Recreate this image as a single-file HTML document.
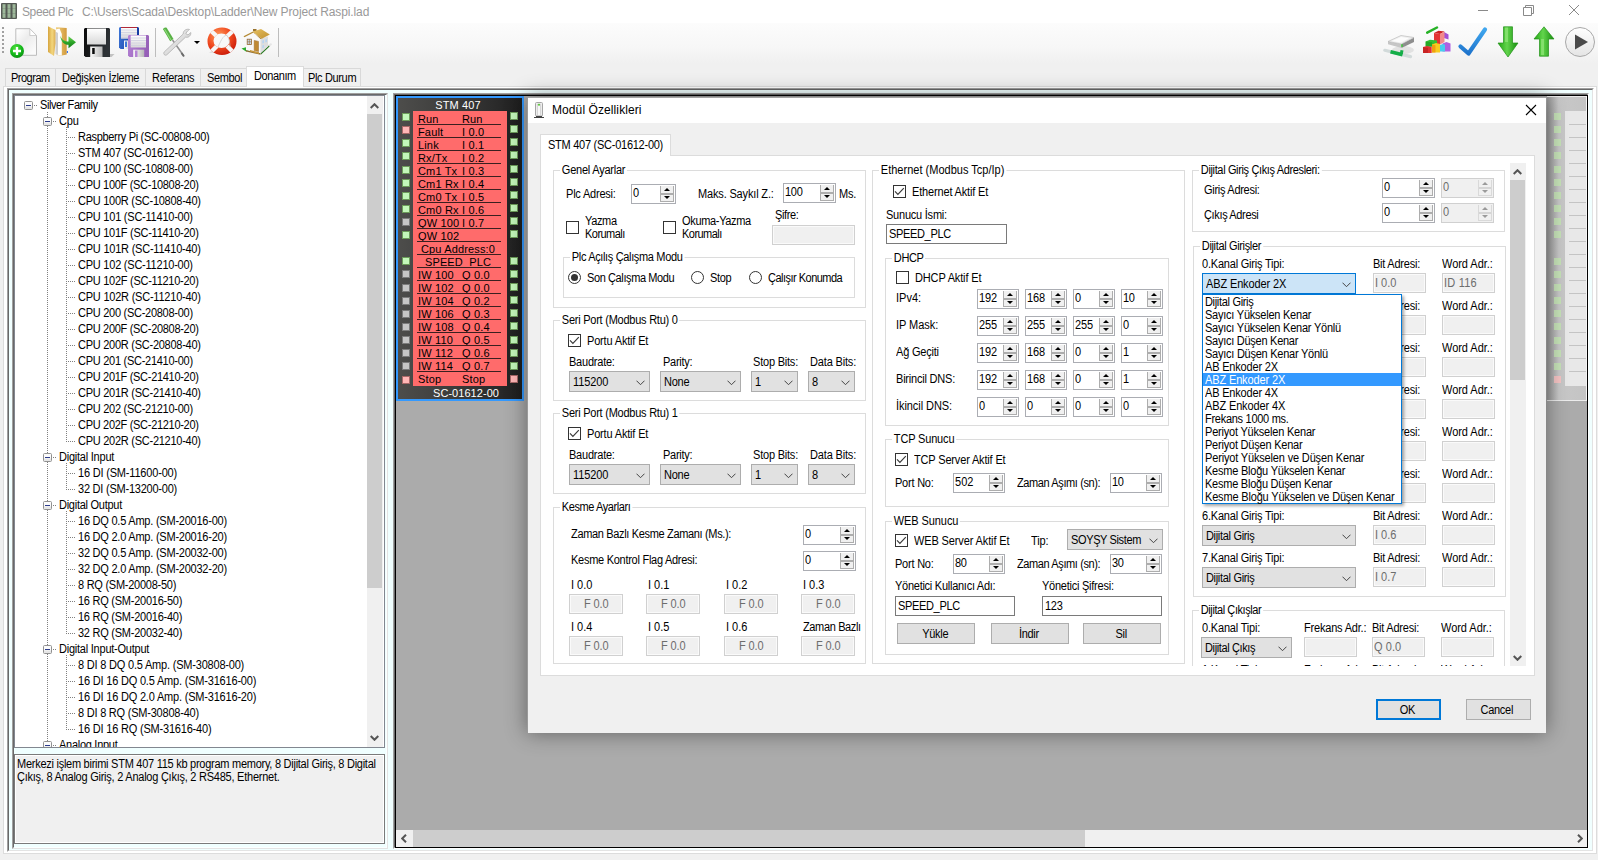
<!DOCTYPE html><html><head><meta charset="utf-8"><title>Speed Plc</title><style>
*{box-sizing:border-box}
html,body{margin:0;padding:0}
body{width:1598px;height:860px;overflow:hidden;background:#f0f0f0;position:relative;
 font-family:"Liberation Sans",sans-serif;font-size:11px;line-height:13px;letter-spacing:-0.28px;color:#000}
.a{position:absolute}
.x{font-size:12px;letter-spacing:-0.305px;transform:scaleX(0.9167);transform-origin:0 0;margin-left:-.5px}
.dtb.c .x,.btn .x{transform-origin:50% 0}
.t{position:absolute;white-space:pre;height:13px}
.g{position:absolute;border:1px solid #dcdcdc}
.gl{position:absolute;background:#fff;padding:0 2px;white-space:pre;height:13px}
.nud{position:absolute;border:1px solid #abadb3;background:#fff}
.nud .v{position:absolute;left:1px;top:2px;white-space:pre}
.nud .b{position:absolute;right:1px;top:1px;width:14px;height:16px;background:#f0f0f0;border-left:1px solid #adadad;border-right:1px solid #adadad;border-bottom:1px solid #adadad}
.nud .b:before{content:"";position:absolute;left:0;right:0;top:7px;height:2px;background:#adadad}
.nud .u,.nud .d{position:absolute;left:3px;width:0;height:0;border-left:3px solid transparent;border-right:3px solid transparent}
.nud .u{top:2px;border-bottom:3px solid #000}
.nud .d{top:10px;border-top:3px solid #000}
.nud.dis{background:#f0f0f0;border-color:#d0d0d0}
.nud.dis .v{color:#6d6d6d}
.nud.dis .b{border-color:#d9d9d9}
.nud.dis .b:before{background:#d5d5d5}
.nud.dis .u{border-bottom-color:#9a9a9a}
.nud.dis .d{border-top-color:#9a9a9a}
.cb{position:absolute;width:13px;height:13px;border:1px solid #333;background:#fff}
.cb svg{position:absolute;left:0;top:0}
.rb{position:absolute;width:13px;height:13px;border:1px solid #333;background:#fff;border-radius:50%}
.rb.on:after{content:"";position:absolute;left:2px;top:2px;width:7px;height:7px;border-radius:50%;background:#333}
.cmb{position:absolute;border:1px solid #adadad;background:#e1e1e1;height:21px}
.cmb .v{position:absolute;left:3px;top:4px;white-space:pre}
.cmb svg{position:absolute;right:4px;top:8px}
.tb{position:absolute;border:1px solid #7a7a7a;background:#fff;height:20px}
.tb .v{position:absolute;left:2px;top:3px;white-space:pre}
.dtb{position:absolute;border:1px solid #d0d0d0;background:#f0f0f0;height:20px;color:#6d6d6d;box-shadow:inset 0 0 0 1px #fafafa}
.dtb .v{position:absolute;left:1.5px;top:3px;white-space:pre}
.dtb.c .v{left:0;right:0;text-align:center}
.btn{position:absolute;border:1px solid #adadad;background:#e1e1e1;text-align:center;height:21px;line-height:21px;padding-right:2px}
.li{position:absolute;left:0;width:198px;height:13px;padding-left:2px;padding-top:1px;line-height:12px;white-space:pre}
</style></head><body>
<div class="a" style="left:0;top:0;width:1598px;height:23px;background:#fff"></div>
<svg class="a" style="left:1px;top:3px" width="16" height="16" viewBox="0 0 16 16"><rect x="0" y="0" width="16" height="16" rx="1" fill="#555a55"/><rect x="1.5" y="1.2" width="3" height="13.6" fill="#9db89a"/><rect x="6.5" y="1.2" width="3" height="13.6" fill="#9db89a"/><rect x="11.5" y="1.2" width="3" height="13.6" fill="#9db89a"/><rect x="0" y="5" width="16" height="1" fill="#555a55" opacity=".22"/><rect x="0" y="10" width="16" height="1" fill="#555a55" opacity=".22"/></svg>
<span class="t" style="left:22px;top:5px;font-size:12px;line-height:15px;height:15px;color:#999;letter-spacing:-0.389px">Speed Plc</span>
<span class="t" style="left:82px;top:5px;font-size:12px;line-height:15px;height:15px;color:#999;letter-spacing:-0.123px">C:\Users\Scada\Desktop\Ladder\New Project Raspi.lad</span>
<svg class="a" style="left:1470px;top:0" width="128" height="22" viewBox="0 0 128 22"><g fill="none" stroke="#8a8a8a" stroke-width="1"><path d="M8 10.5H18"/><path d="M53.5 7.5h8v8h-8z M55.5 7.5v-2h8v8h-2"/><path d="M99 5L109 15M109 5L99 15"/></g></svg>
<div class="a" style="left:0;top:23px;width:1598px;height:40px;background:linear-gradient(#fcfcfc,#f7f7f7 60%,#f0f0f0)"></div>
<div class="a" style="left:2px;top:27px;width:2px;height:27px;background:repeating-linear-gradient(#a0a0a0 0 2px,transparent 2px 4px)"></div>
<svg class="a" style="left:8px;top:26px" width="32" height="33" viewBox="0 0 32 33"><defs><linearGradient id="pg" x1=".2" y1="0" x2=".9" y2=".8"><stop offset="0" stop-color="#fdfdfd"/><stop offset=".45" stop-color="#ececec"/><stop offset="1" stop-color="#fafafa"/></linearGradient><radialGradient id="gc" cx=".4" cy=".3" r=".75"><stop offset="0" stop-color="#52e23e"/><stop offset=".6" stop-color="#14b81a"/><stop offset="1" stop-color="#0a8c10"/></radialGradient></defs><path d="M7.800 2.700H21.800L28.500 9.500V29.300H7.800Z" fill="url(#pg)" stroke="#bcbcbc" stroke-width="1"/><path d="M21.800 2.700V9.500H28.500Z" fill="#fff" stroke="#c4c4c4" stroke-width=".8"/><circle cx="9" cy="25" r="7" fill="url(#gc)"/><path d="M9 21V29M5 25H13" stroke="#fff" stroke-width="2.300"/></svg>
<svg class="a" style="left:46px;top:25px" width="32" height="33" viewBox="0 0 32 33"><defs><linearGradient id="fo" x1="0" y1="0" x2="1" y2="0"><stop offset="0" stop-color="#d6a43e"/><stop offset=".55" stop-color="#f3d77e"/><stop offset="1" stop-color="#dcae52"/></linearGradient><linearGradient id="fo2" x1="0" y1="0" x2="1" y2="0"><stop offset="0" stop-color="#f0d080"/><stop offset="1" stop-color="#d29a3c"/></linearGradient><linearGradient id="ga" x1="0" y1="0" x2="0" y2="1"><stop offset="0" stop-color="#7fdc62"/><stop offset=".5" stop-color="#2fa82a"/><stop offset="1" stop-color="#157a18"/></linearGradient></defs><path d="M10 2.300L20.700 3V29.500L16 30.500L10 30Z" fill="url(#fo2)"/><path d="M9.800 4.500L13.500 3.500L15.800 9V30.500L9.800 29.500Z" fill="#fdfdfd"/><path d="M9.500 6.500L12 8V30L9.500 29Z" fill="#cfcfcf"/><rect x="20.800" y="26" width="1.200" height="2" fill="#3a78f0"/><path d="M2 1.200L9.500 5V18.500L8 31L2 27Z" fill="url(#fo)"/><path d="M14 10.500C16 15 19 16.500 22.500 16.500V11.200L30 17.200L22.500 23.200V19.800C18 19.800 15 16.500 14 10.500Z" fill="url(#ga)"/></svg>
<div class="a" style="left:96px;top:54px;width:17px;height:3px;background:#888;opacity:.45;transform:skewX(-45deg)"></div>
<svg class="a" style="left:84px;top:28px" width="26" height="29" viewBox="0 0 26 29"><defs><linearGradient id="f1" x1="0" y1="0" x2="1" y2=".3"><stop offset="0" stop-color="#0a0a0a"/><stop offset="1" stop-color="#2e3236"/></linearGradient><linearGradient id="f1l" x1="0" y1="0" x2="0" y2="1"><stop offset="0" stop-color="#ffffff"/><stop offset="1" stop-color="#d8d8d8"/></linearGradient><linearGradient id="f1s" x1="0" y1="0" x2="1" y2="0"><stop offset="0" stop-color="#fafafa"/><stop offset="1" stop-color="#b8b8b8"/></linearGradient></defs><path d="M1 0H25L26 1V29H1.500L0 27.5V1Z" fill="url(#f1)"/><rect x="3.0" y="0.5" width="19.0" height="16.0" fill="url(#f1l)"/><rect x="6.2" y="18.5" width="12.3" height="10.5" fill="url(#f1s)"/><rect x="8.2" y="20.0" width="2.5" height="6.0" fill="#0a0a0a"/></svg>
<svg class="a" style="left:119px;top:27px" width="20" height="22" viewBox="0 0 20 22"><defs><linearGradient id="f2" x1="0" y1="0" x2="1" y2=".3"><stop offset="0" stop-color="#3f78d8"/><stop offset="1" stop-color="#1238a0"/></linearGradient><linearGradient id="f2l" x1="0" y1="0" x2="0" y2="1"><stop offset="0" stop-color="#ffffff"/><stop offset="1" stop-color="#d8d8d8"/></linearGradient><linearGradient id="f2s" x1="0" y1="0" x2="1" y2="0"><stop offset="0" stop-color="#fafafa"/><stop offset="1" stop-color="#b8b8b8"/></linearGradient></defs><path d="M1 0H19L20 1V22H1.500L0 20.5V1Z" fill="url(#f2)"/><rect x="2.0" y="0.5" width="16.0" height="11.2" fill="url(#f2l)"/><rect x="2.0" y="2.5" width="16.0" height="1" fill="#cfcfe0" opacity=".8"/><rect x="2.0" y="5.0" width="16.0" height="1" fill="#cfcfe0" opacity=".8"/><rect x="2.0" y="7.5" width="16.0" height="1" fill="#cfcfe0" opacity=".8"/><rect x="2.0" y="10.0" width="16.0" height="1" fill="#cfcfe0" opacity=".8"/><rect x="2.0" y="0" width="16.0" height="1" fill="#b02838"/><rect x="5.0" y="13.5" width="10.0" height="8.5" fill="url(#f2s)"/><rect x="6.0" y="14.5" width="2.0" height="5.5" fill="#3f78d8"/></svg>
<svg class="a" style="left:128px;top:35px" width="21" height="22" viewBox="0 0 21 22"><defs><linearGradient id="f3" x1="0" y1="0" x2="1" y2=".3"><stop offset="0" stop-color="#b684d6"/><stop offset="1" stop-color="#9660b8"/></linearGradient><linearGradient id="f3l" x1="0" y1="0" x2="0" y2="1"><stop offset="0" stop-color="#ffffff"/><stop offset="1" stop-color="#d8d8d8"/></linearGradient><linearGradient id="f3s" x1="0" y1="0" x2="1" y2="0"><stop offset="0" stop-color="#fafafa"/><stop offset="1" stop-color="#b8b8b8"/></linearGradient></defs><path d="M1 0H20L21 1V22H1.500L0 20.5V1Z" fill="url(#f3)"/><rect x="2.7" y="0.5" width="15.3" height="12.0" fill="url(#f3l)"/><rect x="2.7" y="2.5" width="15.3" height="1" fill="#cfcfe0" opacity=".8"/><rect x="2.7" y="5.0" width="15.3" height="1" fill="#cfcfe0" opacity=".8"/><rect x="2.7" y="7.5" width="15.3" height="1" fill="#cfcfe0" opacity=".8"/><rect x="2.7" y="10.0" width="15.3" height="1" fill="#cfcfe0" opacity=".8"/><rect x="5.2" y="14.7" width="11.0" height="7.3" fill="url(#f3s)"/><rect x="7.0" y="15.5" width="2.5" height="6.5" fill="#b684d6"/></svg>
<svg class="a" style="left:160px;top:26px" width="34" height="32" viewBox="0 0 34 32"><defs><linearGradient id="wr" x1="0" y1="0" x2="1" y2="1"><stop offset="0" stop-color="#fafafa"/><stop offset="1" stop-color="#c2c2c2"/></linearGradient></defs><path d="M12.500 14L23.500 29.500" stroke="#8e8e8e" stroke-width="1.500"/><path d="M21.500 27L24 30.500" stroke="#6a6a6a" stroke-width="2"/><path d="M3.200 3.500C3 2 5.500 0.800 6.800 2L13.500 13L10.200 15.200Z" fill="#58b044"/><path d="M4.500 3L11 14" stroke="#8ad878" stroke-width="1.200"/><path d="M29.500 3.500C26.500 2.500 23 4.500 23.200 8L4.200 26C2.800 27.800 5 30.200 6.800 28.800L25.500 11.200C28.500 12 31.200 9.500 30.800 6.500L28 9L25.800 7.500L27.500 5Z" fill="url(#wr)" stroke="#a8a8a8" stroke-width=".7"/></svg>
<svg class="a" style="left:206px;top:26px" width="32" height="31" viewBox="0 0 32 31"><defs><radialGradient id="lb" cx=".38" cy=".3" r=".75"><stop offset="0" stop-color="#ff9a5a"/><stop offset=".55" stop-color="#f04a20"/><stop offset="1" stop-color="#c81808"/></radialGradient><clipPath id="lbc"><path d="M16 1.5A14.5 13.8 0 1 0 16 29.1A14.5 13.8 0 1 0 16 1.500ZM15.500 7.500A8 7.300 0 1 1 15.500 22.100A8 7.300 0 1 1 15.500 7.500Z" clip-rule="evenodd"/></clipPath></defs><path d="M3 27L10 21L22 27Z" fill="#d8d8d8" opacity=".7"/><path d="M16 1.5A14.5 13.8 0 1 0 16 29.1A14.5 13.8 0 1 0 16 1.500ZM15.500 7.500A8 7.300 0 1 1 15.500 22.100A8 7.300 0 1 1 15.500 7.500Z" fill="url(#lb)" fill-rule="evenodd"/><g clip-path="url(#lbc)" stroke="#f6f6f6" stroke-width="4.400"><path d="M3 3L11 10.500"/><path d="M29 3L21 10.500"/><path d="M3 28L11 20"/><path d="M29 28L21 20"/></g><path d="M12 21C16 12 18 9 21 9.500C23 12 24 17 24 21" fill="none" stroke="#c8c8c8" stroke-width=".7"/></svg>
<svg class="a" style="left:240px;top:27px" width="32" height="30" viewBox="0 0 32 30"><defs><linearGradient id="rf" x1="0" y1="0" x2="1" y2="1"><stop offset="0" stop-color="#e6c060"/><stop offset="1" stop-color="#c09030"/></linearGradient></defs><path d="M20 24L31 16L32 17.500L21 27Z" fill="#d8d8d8" opacity=".6"/><path d="M1.500 21.500L6 20.300L10.500 23L6 24.600Z" fill="#2cac2c"/><path d="M20.500 26.300L29 18.500L29.500 19.500L21 27.500Z" fill="#2a7a22"/><path d="M6 24.500L20.500 27.800V26.300L6 23Z" fill="#8a6a30"/><path d="M6 9.500L12.500 5.500L20.500 11.500V26.300L6 23Z" fill="#f9f9f9"/><path d="M20.500 11.500L28 9.500V19.300L20.500 26.300Z" fill="#dedede"/><path d="M10 23L19 25.300V27L10 24.600Z" fill="#c8983c"/><rect x="7.200" y="12.200" width="4.300" height="5.300" fill="#c4dcf2" stroke="#9a6a30" stroke-width=".8"/><path d="M9.350 12.200V17.500M7.200 14.800H11.500" stroke="#9a6a30" stroke-width=".6"/><path d="M14.200 13.400L18.500 14.400V24.600L14.200 23.600Z" fill="#c08a34" stroke="#9a6a28" stroke-width=".5"/><path d="M22.300 13.500L24 13V16L22.300 16.600ZM25.300 12.500L27 12V15L25.300 15.600ZM22.300 18.500L24 17.800V20.500L22.300 21.500Z" fill="#b8d4f0"/><rect x="13" y="2" width="3.500" height="2.500" fill="#9a7430"/><path d="M12.500 4.700L21 2L29.800 7.500L21.800 11.800Z" fill="url(#rf)"/><path d="M3.500 9.300L12.500 4.700L13.600 5.600L4.500 10.300Z" fill="#b48a34"/><path d="M12.500 4.700L13.600 5.600L21.800 11.800L20.500 12Z" fill="#a87c2c"/></svg>
<svg class="a" style="left:1383px;top:33px" width="32" height="26" viewBox="0 0 32 26"><ellipse cx="20" cy="17" rx="11" ry="4" fill="#000" opacity=".08"/><path d="M5 8.500L18.500 11V15L5 11.200Z" fill="#c6c6c6"/><path d="M18.500 11L31 4.500V9L18.500 15Z" fill="#8e8e8e"/><path d="M5 8.500L18 2.500L31 4.500L18.500 11Z" fill="#efefef" stroke="#b4b4b4" stroke-width=".6"/><path d="M9 8L18 4L26 5.200L18 9.500Z" fill="#fff" opacity=".8"/><rect x="18.300" y="11.300" width="1.300" height="2.600" fill="#28d028"/><path d="M1.800 17.300L27.500 23.600" stroke="#d2dada" stroke-width="3.200" stroke-linecap="round"/><path d="M7.500 18.800L19.500 21.800" stroke="#14ae48" stroke-width="3.600"/><path d="M18.300 21L19 17.200" stroke="#14ae48" stroke-width="3"/></svg>
<svg class="a" style="left:1421px;top:25px" width="32" height="30" viewBox="0 0 32 30"><path d="M6.200 7.700L16 2.500" stroke="#26b226" stroke-width="2.500" stroke-linecap="round"/><path d="M23 7L27.500 9.500V14.500L23 13Z" fill="#a452d4"/><path d="M13 8L17.500 5.700L23.500 6.500L19 9Z" fill="#cc2020"/><path d="M13 8L19 9V19.500L13 18.500Z" fill="#e43434"/><path d="M19 9L23.500 6.500V17L19 19.500Z" fill="#f28a8a"/><path d="M21.500 18.500L25.500 17L29.500 18.500V26.500L21.500 26.500Z" fill="#b060e0"/><path d="M4.700 16.500L9 14.700L16 15.500V21.500L4.700 21.500Z" fill="#34c034"/><path d="M4.700 16.500L11 17.300V21.500H4.700Z" fill="#26a826"/><path d="M2 22L6 21L10.700 22V28L2 28Z" fill="#e03030"/><path d="M2 22L7 23V28H2Z" fill="#c82424"/><path d="M11 19.500L15 18L19 19V27.500L11 27.500Z" fill="#f8cc20"/><path d="M11 19.500L14.500 20.300V27.500H11Z" fill="#f0a010"/><path d="M19 20L22 19L24 19.800V26.500H19Z" fill="#48ccee"/></svg>
<svg class="a" style="left:1457px;top:26px" width="32" height="32" viewBox="0 0 32 32"><defs><linearGradient id="ck" x1="0" y1="0" x2="0" y2="1"><stop offset="0" stop-color="#3fa6ee"/><stop offset="1" stop-color="#1e74cc"/></linearGradient></defs><path d="M3.500 20.500L11.500 27.500L28 3.500" fill="none" stroke="url(#ck)" stroke-width="4.200" stroke-linecap="round" stroke-linejoin="round"/></svg>
<svg class="a" style="left:1497px;top:26px" width="22" height="32" viewBox="0 0 22 32"><defs><linearGradient id="gd" x1="0" y1="0" x2="1" y2="0"><stop offset="0" stop-color="#23a614"/><stop offset=".45" stop-color="#62d44c"/><stop offset="1" stop-color="#168e0c"/></linearGradient></defs><path d="M6.500 0.800H15.500V17H21L11 31L1 17H6.500Z" fill="url(#gd)" stroke="#23901a" stroke-width=".7"/><path d="M8 1.500H11V16H8Z" fill="#a8f090" opacity=".5"/></svg>
<svg class="a" style="left:1533px;top:26px" width="22" height="31" viewBox="0 0 22 31"><path d="M6.500 30.200H15.500V13H21L11 0.800L1 13H6.500Z" fill="url(#gd)" stroke="#23901a" stroke-width=".7"/><path d="M8 29H11V13H8Z" fill="#a8f090" opacity=".5"/></svg>
<svg class="a" style="left:1564px;top:26px" width="32" height="32" viewBox="0 0 32 32"><defs><linearGradient id="pl" x1="0" y1="0" x2="0" y2="1"><stop offset="0" stop-color="#fff"/><stop offset="1" stop-color="#e4e4e4"/></linearGradient></defs><circle cx="16" cy="16" r="14.5" fill="url(#pl)" stroke="#a8a8a8" stroke-width="1"/><path d="M11 8.5L24 16L11 23.5Z" fill="#4a4a4a"/></svg>
<div class="a" style="left:155px;top:28px;width:1px;height:29px;background:#bdbdbd"></div>
<div class="a" style="left:278px;top:28px;width:1px;height:29px;background:#bdbdbd"></div>
<div class="a" style="left:194px;top:41px;width:0;height:0;border-left:3px solid transparent;border-right:3px solid transparent;border-top:3px solid #000"></div>
<div class="a" style="left:3px;top:86px;width:1594px;height:768px;border:1px solid #dcdcdc;background:#fff"></div>
<div class="a" style="left:5px;top:68px;width:51px;height:18px;background:#f0f0f0;border:1px solid #d9d9d9;border-bottom:none"></div>
<span class="t x" style="left:11px;top:72px;letter-spacing:-0.544px;">Program</span>
<div class="a" style="left:55px;top:68px;width:91px;height:18px;background:#f0f0f0;border:1px solid #d9d9d9;border-bottom:none"></div>
<span class="t x" style="left:62px;top:72px;letter-spacing:-0.300px;">Değişken İzleme</span>
<div class="a" style="left:145px;top:68px;width:56px;height:18px;background:#f0f0f0;border:1px solid #d9d9d9;border-bottom:none"></div>
<span class="t x" style="left:152px;top:72px;letter-spacing:-0.333px;">Referans</span>
<div class="a" style="left:200px;top:68px;width:47px;height:18px;background:#f0f0f0;border:1px solid #d9d9d9;border-bottom:none"></div>
<span class="t x" style="left:207px;top:72px;letter-spacing:-0.418px;">Sembol</span>
<div class="a" style="left:246px;top:66px;width:58px;height:21px;background:#fff;border:1px solid #dcdcdc;border-bottom:none"></div>
<span class="t x" style="left:254px;top:70px;letter-spacing:-0.443px;">Donanım</span>
<div class="a" style="left:303px;top:68px;width:58px;height:18px;background:#f0f0f0;border:1px solid #d9d9d9;border-bottom:none"></div>
<span class="t x" style="left:308px;top:72px;letter-spacing:-0.381px;">Plc Durum</span>
<div class="a" style="left:7px;top:88px;width:1587px;height:764px;background:#f0ffff;border-top:1px solid #a0a0a0;border-left:1px solid #a0a0a0;border-right:1px solid #fff;border-bottom:1px solid #fff"></div>
<div class="a" style="left:8px;top:89px;width:1585px;height:762px;border-top:1px solid #696969;border-left:1px solid #696969;border-right:1px solid #e3e3e3;border-bottom:1px solid #e3e3e3"></div>
<div class="a" style="left:12px;top:93px;width:376px;height:756px;border-top:1px solid #a0a0a0;border-left:1px solid #a0a0a0;border-right:1px solid #e3e3e3;border-bottom:1px solid #e3e3e3"></div>
<div class="a" style="left:13px;top:94px;width:374px;height:754px;border-top:1px solid #696969;border-left:1px solid #696969;border-right:1px solid #fbffff;border-bottom:1px solid #fbffff"></div>
<div class="a" style="left:14px;top:95px;width:371px;height:653px;background:#fff;border:1px solid #828790"></div>
<div class="a" id="tree" style="left:15px;top:96px;width:352px;height:651px;overflow:hidden;background:#fff">
<div class="a" style="left:32px;top:16px;width:1px;height:640px;background:repeating-linear-gradient(#808080 0 1px,transparent 1px 2px)"></div>
<div class="a" style="left:51px;top:31px;width:1px;height:315px;background:repeating-linear-gradient(#808080 0 1px,transparent 1px 2px)"></div>
<div class="a" style="left:51px;top:367px;width:1px;height:27px;background:repeating-linear-gradient(#808080 0 1px,transparent 1px 2px)"></div>
<div class="a" style="left:51px;top:415px;width:1px;height:123px;background:repeating-linear-gradient(#808080 0 1px,transparent 1px 2px)"></div>
<div class="a" style="left:51px;top:559px;width:1px;height:75px;background:repeating-linear-gradient(#808080 0 1px,transparent 1px 2px)"></div>
<svg class="a" style="left:9px;top:5px" width="9" height="9" viewBox="0 0 9 9"><rect x=".5" y=".5" width="8" height="8" rx="1" fill="#fbfbfb" stroke="#919191"/><rect x="1" y="5.500" width="7" height="2.500" fill="#e6e6e6"/><path d="M2 4.5H7" stroke="#2c3c8c" stroke-width="1"/></svg>
<div class="a" style="left:19px;top:9px;width:4px;height:1px;background:repeating-linear-gradient(90deg,#808080 0 1px,transparent 1px 2px)"></div>
<span class="t x" style="left:25px;top:3px;letter-spacing:-0.458px;">Silver Family</span>
<svg class="a" style="left:28px;top:21px" width="9" height="9" viewBox="0 0 9 9"><rect x=".5" y=".5" width="8" height="8" rx="1" fill="#fbfbfb" stroke="#919191"/><rect x="1" y="5.500" width="7" height="2.500" fill="#e6e6e6"/><path d="M2 4.5H7" stroke="#2c3c8c" stroke-width="1"/></svg>
<div class="a" style="left:38px;top:25px;width:4px;height:1px;background:repeating-linear-gradient(90deg,#808080 0 1px,transparent 1px 2px)"></div>
<span class="t x" style="left:44px;top:19px;letter-spacing:-0.177px;">Cpu</span>
<div class="a" style="left:53px;top:41px;width:7px;height:1px;background:repeating-linear-gradient(90deg,#808080 0 1px,transparent 1px 2px)"></div>
<span class="t x" style="left:63px;top:35px;letter-spacing:-0.339px;">Raspberry Pi (SC-00808-00)</span>
<div class="a" style="left:53px;top:57px;width:7px;height:1px;background:repeating-linear-gradient(90deg,#808080 0 1px,transparent 1px 2px)"></div>
<span class="t x" style="left:63px;top:51px;letter-spacing:-0.283px;">STM 407 (SC-01612-00)</span>
<div class="a" style="left:53px;top:73px;width:7px;height:1px;background:repeating-linear-gradient(90deg,#808080 0 1px,transparent 1px 2px)"></div>
<span class="t x" style="left:63px;top:67px;letter-spacing:-0.294px;">CPU 100 (SC-10808-00)</span>
<div class="a" style="left:53px;top:89px;width:7px;height:1px;background:repeating-linear-gradient(90deg,#808080 0 1px,transparent 1px 2px)"></div>
<span class="t x" style="left:63px;top:83px;letter-spacing:-0.326px;">CPU 100F (SC-10808-20)</span>
<div class="a" style="left:53px;top:105px;width:7px;height:1px;background:repeating-linear-gradient(90deg,#808080 0 1px,transparent 1px 2px)"></div>
<span class="t x" style="left:63px;top:99px;letter-spacing:-0.282px;">CPU 100R (SC-10808-40)</span>
<div class="a" style="left:53px;top:121px;width:7px;height:1px;background:repeating-linear-gradient(90deg,#808080 0 1px,transparent 1px 2px)"></div>
<span class="t x" style="left:63px;top:115px;letter-spacing:-0.251px;">CPU 101 (SC-11410-00)</span>
<div class="a" style="left:53px;top:137px;width:7px;height:1px;background:repeating-linear-gradient(90deg,#808080 0 1px,transparent 1px 2px)"></div>
<span class="t x" style="left:63px;top:131px;letter-spacing:-0.286px;">CPU 101F (SC-11410-20)</span>
<div class="a" style="left:53px;top:153px;width:7px;height:1px;background:repeating-linear-gradient(90deg,#808080 0 1px,transparent 1px 2px)"></div>
<span class="t x" style="left:63px;top:147px;letter-spacing:-0.242px;">CPU 101R (SC-11410-40)</span>
<div class="a" style="left:53px;top:169px;width:7px;height:1px;background:repeating-linear-gradient(90deg,#808080 0 1px,transparent 1px 2px)"></div>
<span class="t x" style="left:63px;top:163px;letter-spacing:-0.251px;">CPU 102 (SC-11210-00)</span>
<div class="a" style="left:53px;top:185px;width:7px;height:1px;background:repeating-linear-gradient(90deg,#808080 0 1px,transparent 1px 2px)"></div>
<span class="t x" style="left:63px;top:179px;letter-spacing:-0.286px;">CPU 102F (SC-11210-20)</span>
<div class="a" style="left:53px;top:201px;width:7px;height:1px;background:repeating-linear-gradient(90deg,#808080 0 1px,transparent 1px 2px)"></div>
<span class="t x" style="left:63px;top:195px;letter-spacing:-0.242px;">CPU 102R (SC-11210-40)</span>
<div class="a" style="left:53px;top:217px;width:7px;height:1px;background:repeating-linear-gradient(90deg,#808080 0 1px,transparent 1px 2px)"></div>
<span class="t x" style="left:63px;top:211px;letter-spacing:-0.294px;">CPU 200 (SC-20808-00)</span>
<div class="a" style="left:53px;top:233px;width:7px;height:1px;background:repeating-linear-gradient(90deg,#808080 0 1px,transparent 1px 2px)"></div>
<span class="t x" style="left:63px;top:227px;letter-spacing:-0.326px;">CPU 200F (SC-20808-20)</span>
<div class="a" style="left:53px;top:249px;width:7px;height:1px;background:repeating-linear-gradient(90deg,#808080 0 1px,transparent 1px 2px)"></div>
<span class="t x" style="left:63px;top:243px;letter-spacing:-0.282px;">CPU 200R (SC-20808-40)</span>
<div class="a" style="left:53px;top:265px;width:7px;height:1px;background:repeating-linear-gradient(90deg,#808080 0 1px,transparent 1px 2px)"></div>
<span class="t x" style="left:63px;top:259px;letter-spacing:-0.294px;">CPU 201 (SC-21410-00)</span>
<div class="a" style="left:53px;top:281px;width:7px;height:1px;background:repeating-linear-gradient(90deg,#808080 0 1px,transparent 1px 2px)"></div>
<span class="t x" style="left:63px;top:275px;letter-spacing:-0.326px;">CPU 201F (SC-21410-20)</span>
<div class="a" style="left:53px;top:297px;width:7px;height:1px;background:repeating-linear-gradient(90deg,#808080 0 1px,transparent 1px 2px)"></div>
<span class="t x" style="left:63px;top:291px;letter-spacing:-0.282px;">CPU 201R (SC-21410-40)</span>
<div class="a" style="left:53px;top:313px;width:7px;height:1px;background:repeating-linear-gradient(90deg,#808080 0 1px,transparent 1px 2px)"></div>
<span class="t x" style="left:63px;top:307px;letter-spacing:-0.294px;">CPU 202 (SC-21210-00)</span>
<div class="a" style="left:53px;top:329px;width:7px;height:1px;background:repeating-linear-gradient(90deg,#808080 0 1px,transparent 1px 2px)"></div>
<span class="t x" style="left:63px;top:323px;letter-spacing:-0.326px;">CPU 202F (SC-21210-20)</span>
<div class="a" style="left:53px;top:345px;width:7px;height:1px;background:repeating-linear-gradient(90deg,#808080 0 1px,transparent 1px 2px)"></div>
<span class="t x" style="left:63px;top:339px;letter-spacing:-0.282px;">CPU 202R (SC-21210-40)</span>
<svg class="a" style="left:28px;top:357px" width="9" height="9" viewBox="0 0 9 9"><rect x=".5" y=".5" width="8" height="8" rx="1" fill="#fbfbfb" stroke="#919191"/><rect x="1" y="5.500" width="7" height="2.500" fill="#e6e6e6"/><path d="M2 4.5H7" stroke="#2c3c8c" stroke-width="1"/></svg>
<div class="a" style="left:38px;top:361px;width:4px;height:1px;background:repeating-linear-gradient(90deg,#808080 0 1px,transparent 1px 2px)"></div>
<span class="t x" style="left:44px;top:355px;letter-spacing:-0.251px;">Digital Input</span>
<div class="a" style="left:53px;top:377px;width:7px;height:1px;background:repeating-linear-gradient(90deg,#808080 0 1px,transparent 1px 2px)"></div>
<span class="t x" style="left:63px;top:371px;letter-spacing:-0.202px;">16 DI (SM-11600-00)</span>
<div class="a" style="left:53px;top:393px;width:7px;height:1px;background:repeating-linear-gradient(90deg,#808080 0 1px,transparent 1px 2px)"></div>
<span class="t x" style="left:63px;top:387px;letter-spacing:-0.249px;">32 DI (SM-13200-00)</span>
<svg class="a" style="left:28px;top:405px" width="9" height="9" viewBox="0 0 9 9"><rect x=".5" y=".5" width="8" height="8" rx="1" fill="#fbfbfb" stroke="#919191"/><rect x="1" y="5.500" width="7" height="2.500" fill="#e6e6e6"/><path d="M2 4.5H7" stroke="#2c3c8c" stroke-width="1"/></svg>
<div class="a" style="left:38px;top:409px;width:4px;height:1px;background:repeating-linear-gradient(90deg,#808080 0 1px,transparent 1px 2px)"></div>
<span class="t x" style="left:44px;top:403px;letter-spacing:-0.285px;">Digital Output</span>
<div class="a" style="left:53px;top:425px;width:7px;height:1px;background:repeating-linear-gradient(90deg,#808080 0 1px,transparent 1px 2px)"></div>
<span class="t x" style="left:63px;top:419px;letter-spacing:-0.249px;">16 DQ 0.5 Amp. (SM-20016-00)</span>
<div class="a" style="left:53px;top:441px;width:7px;height:1px;background:repeating-linear-gradient(90deg,#808080 0 1px,transparent 1px 2px)"></div>
<span class="t x" style="left:63px;top:435px;letter-spacing:-0.249px;">16 DQ 2.0 Amp. (SM-20016-20)</span>
<div class="a" style="left:53px;top:457px;width:7px;height:1px;background:repeating-linear-gradient(90deg,#808080 0 1px,transparent 1px 2px)"></div>
<span class="t x" style="left:63px;top:451px;letter-spacing:-0.249px;">32 DQ 0.5 Amp. (SM-20032-00)</span>
<div class="a" style="left:53px;top:473px;width:7px;height:1px;background:repeating-linear-gradient(90deg,#808080 0 1px,transparent 1px 2px)"></div>
<span class="t x" style="left:63px;top:467px;letter-spacing:-0.249px;">32 DQ 2.0 Amp. (SM-20032-20)</span>
<div class="a" style="left:53px;top:489px;width:7px;height:1px;background:repeating-linear-gradient(90deg,#808080 0 1px,transparent 1px 2px)"></div>
<span class="t x" style="left:63px;top:483px;letter-spacing:-0.280px;">8 RQ (SM-20008-50)</span>
<div class="a" style="left:53px;top:505px;width:7px;height:1px;background:repeating-linear-gradient(90deg,#808080 0 1px,transparent 1px 2px)"></div>
<span class="t x" style="left:63px;top:499px;letter-spacing:-0.271px;">16 RQ (SM-20016-50)</span>
<div class="a" style="left:53px;top:521px;width:7px;height:1px;background:repeating-linear-gradient(90deg,#808080 0 1px,transparent 1px 2px)"></div>
<span class="t x" style="left:63px;top:515px;letter-spacing:-0.271px;">16 RQ (SM-20016-40)</span>
<div class="a" style="left:53px;top:537px;width:7px;height:1px;background:repeating-linear-gradient(90deg,#808080 0 1px,transparent 1px 2px)"></div>
<span class="t x" style="left:63px;top:531px;letter-spacing:-0.271px;">32 RQ (SM-20032-40)</span>
<svg class="a" style="left:28px;top:549px" width="9" height="9" viewBox="0 0 9 9"><rect x=".5" y=".5" width="8" height="8" rx="1" fill="#fbfbfb" stroke="#919191"/><rect x="1" y="5.500" width="7" height="2.500" fill="#e6e6e6"/><path d="M2 4.5H7" stroke="#2c3c8c" stroke-width="1"/></svg>
<div class="a" style="left:38px;top:553px;width:4px;height:1px;background:repeating-linear-gradient(90deg,#808080 0 1px,transparent 1px 2px)"></div>
<span class="t x" style="left:44px;top:547px;letter-spacing:-0.250px;">Digital Input-Output</span>
<div class="a" style="left:53px;top:569px;width:7px;height:1px;background:repeating-linear-gradient(90deg,#808080 0 1px,transparent 1px 2px)"></div>
<span class="t x" style="left:63px;top:563px;letter-spacing:-0.216px;">8 DI 8 DQ 0.5 Amp. (SM-30808-00)</span>
<div class="a" style="left:53px;top:585px;width:7px;height:1px;background:repeating-linear-gradient(90deg,#808080 0 1px,transparent 1px 2px)"></div>
<span class="t x" style="left:63px;top:579px;letter-spacing:-0.207px;">16 DI 16 DQ 0.5 Amp. (SM-31616-00)</span>
<div class="a" style="left:53px;top:601px;width:7px;height:1px;background:repeating-linear-gradient(90deg,#808080 0 1px,transparent 1px 2px)"></div>
<span class="t x" style="left:63px;top:595px;letter-spacing:-0.207px;">16 DI 16 DQ 2.0 Amp. (SM-31616-20)</span>
<div class="a" style="left:53px;top:617px;width:7px;height:1px;background:repeating-linear-gradient(90deg,#808080 0 1px,transparent 1px 2px)"></div>
<span class="t x" style="left:63px;top:611px;letter-spacing:-0.239px;">8 DI 8 RQ (SM-30808-40)</span>
<div class="a" style="left:53px;top:633px;width:7px;height:1px;background:repeating-linear-gradient(90deg,#808080 0 1px,transparent 1px 2px)"></div>
<span class="t x" style="left:63px;top:627px;letter-spacing:-0.208px;">16 DI 16 RQ (SM-31616-40)</span>
<svg class="a" style="left:28px;top:645px" width="9" height="9" viewBox="0 0 9 9"><rect x=".5" y=".5" width="8" height="8" rx="1" fill="#fbfbfb" stroke="#919191"/><rect x="1" y="5.500" width="7" height="2.500" fill="#e6e6e6"/><path d="M2 4.5H7" stroke="#2c3c8c" stroke-width="1"/></svg>
<div class="a" style="left:38px;top:649px;width:4px;height:1px;background:repeating-linear-gradient(90deg,#808080 0 1px,transparent 1px 2px)"></div>
<span class="t x" style="left:44px;top:643px;">Analog Input</span>
</div>
<div class="a" style="left:367px;top:96px;width:16px;height:651px;background:#f0f0f0"></div>
<div class="a" style="left:367px;top:114px;width:15px;height:474px;background:#cdcdcd"></div>
<svg class="a" style="left:370px;top:103px" width="9" height="6" viewBox="0 0 9 6"><path d="M0.7 5 L4.5 1.2 L8.3 5" fill="none" stroke="#555" stroke-width="2"/></svg>
<svg class="a" style="left:370px;top:735px" width="9" height="6" viewBox="0 0 9 6"><path d="M0.7 1 L4.5 4.8 L8.3 1" fill="none" stroke="#555" stroke-width="2"/></svg>
<div class="a" style="left:14px;top:754px;width:371px;height:90px;background:#f0f0f0;border:1px solid #7a7a7a;box-shadow:inset 0 0 0 1px #fff"></div>
<span class="t x" style="left:17px;top:758px;letter-spacing:-0.287px;">Merkezi işlem birimi STM 407 115 kb program memory, 8 Dijital Giriş, 8 Digital</span>
<span class="t x" style="left:17px;top:771px;letter-spacing:-0.264px;">Çıkış, 8 Analog Giriş, 2 Analog Çıkış, 2 RS485, Ethernet.</span>
<div class="a" style="left:393px;top:93px;width:1196px;height:756px;background:#ababab;border-top:1px solid #a0a0a0;border-left:1px solid #a0a0a0;border-right:1px solid #fff;border-bottom:1px solid #fff"></div>
<div class="a" style="left:394px;top:94px;width:1194px;height:754px;border-top:1px solid #696969;border-left:1px solid #696969;border-right:1px solid #e3e3e3;border-bottom:1px solid #e3e3e3"></div>
<div class="a" style="left:395px;top:95px;width:1193px;height:753px;border:1px solid #000"></div>
<div class="a" style="left:396px;top:830px;width:1191px;height:17px;background:#f0f0f0"></div>
<div class="a" style="left:413px;top:830px;width:672px;height:17px;background:#cdcdcd"></div>
<svg class="a" style="left:401px;top:834px" width="6" height="9" viewBox="0 0 6 9"><path d="M5 0.7 L1.2 4.5 L5 8.3" fill="none" stroke="#555" stroke-width="2"/></svg>
<svg class="a" style="left:1577px;top:834px" width="6" height="9" viewBox="0 0 6 9"><path d="M1 0.7 L4.8 4.5 L1 8.3" fill="none" stroke="#555" stroke-width="2"/></svg>
<div class="a" style="left:396px;top:96px;width:128px;height:305px;background:linear-gradient(90deg,#4d4d4b,#3c3c3b 45%,#2a2a2a 80%,#1e1e1e);border:2px solid #3399ff"></div>
<span class="t" style="left:396px;top:99px;width:124px;text-align:center;color:#fff;letter-spacing:0.1px">STM 407</span>
<span class="t" style="left:398px;top:387px;width:136px;text-align:center;color:#fff;letter-spacing:0.05px">SC-01612-00</span>
<div class="a" style="left:413px;top:111px;width:94px;height:275px;background:#ff6b6b"></div>
<span class="t" style="left:418px;top:113px;font-size:11px;letter-spacing:0.15px;color:#000">Run</span>
<span class="t" style="left:462px;top:113px;font-size:11px;letter-spacing:0.15px;color:#000">Run</span>
<div class="a" style="left:417px;top:124px;width:84px;height:1px;background:#3a2020"></div>
<div class="a" style="left:402px;top:113px;width:8px;height:8px;background:#c3f7ba;border:1px solid #6c9c5a"></div>
<div class="a" style="left:510px;top:112px;width:8px;height:8px;background:#c3f7ba;border:1px solid #6c9c5a"></div>
<span class="t" style="left:418px;top:126px;font-size:11px;letter-spacing:0.15px;color:#000">Fault</span>
<span class="t" style="left:462px;top:126px;font-size:11px;letter-spacing:0.15px;color:#000">I 0.0</span>
<div class="a" style="left:417px;top:137px;width:84px;height:1px;background:#3a2020"></div>
<div class="a" style="left:402px;top:126px;width:8px;height:8px;background:#ffb6b6;border:1px solid #a86868"></div>
<div class="a" style="left:510px;top:125px;width:8px;height:8px;background:#c3f7ba;border:1px solid #6c9c5a"></div>
<span class="t" style="left:418px;top:139px;font-size:11px;letter-spacing:0.15px;color:#000">Link</span>
<span class="t" style="left:462px;top:139px;font-size:11px;letter-spacing:0.15px;color:#000">I 0.1</span>
<div class="a" style="left:417px;top:150px;width:84px;height:1px;background:#3a2020"></div>
<div class="a" style="left:402px;top:139px;width:8px;height:8px;background:#c3f7ba;border:1px solid #6c9c5a"></div>
<div class="a" style="left:510px;top:138px;width:8px;height:8px;background:#c3f7ba;border:1px solid #6c9c5a"></div>
<span class="t" style="left:418px;top:152px;font-size:11px;letter-spacing:0.15px;color:#000">Rx/Tx</span>
<span class="t" style="left:462px;top:152px;font-size:11px;letter-spacing:0.15px;color:#000">I 0.2</span>
<div class="a" style="left:417px;top:163px;width:84px;height:1px;background:#3a2020"></div>
<div class="a" style="left:402px;top:152px;width:8px;height:8px;background:#c3f7ba;border:1px solid #6c9c5a"></div>
<div class="a" style="left:510px;top:151px;width:8px;height:8px;background:#c3f7ba;border:1px solid #6c9c5a"></div>
<span class="t" style="left:418px;top:165px;font-size:11px;letter-spacing:0.15px;color:#000">Cm1 Tx</span>
<span class="t" style="left:462px;top:165px;font-size:11px;letter-spacing:0.15px;color:#000">I 0.3</span>
<div class="a" style="left:417px;top:176px;width:84px;height:1px;background:#3a2020"></div>
<div class="a" style="left:402px;top:166px;width:8px;height:8px;background:#c3f7ba;border:1px solid #6c9c5a"></div>
<div class="a" style="left:510px;top:165px;width:8px;height:8px;background:#c3f7ba;border:1px solid #6c9c5a"></div>
<span class="t" style="left:418px;top:178px;font-size:11px;letter-spacing:0.15px;color:#000">Cm1 Rx</span>
<span class="t" style="left:462px;top:178px;font-size:11px;letter-spacing:0.15px;color:#000">I 0.4</span>
<div class="a" style="left:417px;top:189px;width:84px;height:1px;background:#3a2020"></div>
<div class="a" style="left:402px;top:179px;width:8px;height:8px;background:#c3f7ba;border:1px solid #6c9c5a"></div>
<div class="a" style="left:510px;top:178px;width:8px;height:8px;background:#c3f7ba;border:1px solid #6c9c5a"></div>
<span class="t" style="left:418px;top:191px;font-size:11px;letter-spacing:0.15px;color:#000">Cm0 Tx</span>
<span class="t" style="left:462px;top:191px;font-size:11px;letter-spacing:0.15px;color:#000">I 0.5</span>
<div class="a" style="left:417px;top:202px;width:84px;height:1px;background:#3a2020"></div>
<div class="a" style="left:402px;top:192px;width:8px;height:8px;background:#c3f7ba;border:1px solid #6c9c5a"></div>
<div class="a" style="left:510px;top:191px;width:8px;height:8px;background:#c3f7ba;border:1px solid #6c9c5a"></div>
<span class="t" style="left:418px;top:204px;font-size:11px;letter-spacing:0.15px;color:#000">Cm0 Rx</span>
<span class="t" style="left:462px;top:204px;font-size:11px;letter-spacing:0.15px;color:#000">I 0.6</span>
<div class="a" style="left:417px;top:215px;width:84px;height:1px;background:#3a2020"></div>
<div class="a" style="left:402px;top:205px;width:8px;height:8px;background:#c3f7ba;border:1px solid #6c9c5a"></div>
<div class="a" style="left:510px;top:204px;width:8px;height:8px;background:#c3f7ba;border:1px solid #6c9c5a"></div>
<span class="t" style="left:418px;top:217px;font-size:11px;letter-spacing:0.15px;color:#000">QW 100</span>
<span class="t" style="left:462px;top:217px;font-size:11px;letter-spacing:0.15px;color:#000">I 0.7</span>
<div class="a" style="left:417px;top:228px;width:84px;height:1px;background:#3a2020"></div>
<div class="a" style="left:402px;top:218px;width:8px;height:8px;background:#c6c6c6;border:1px solid #7c7c7c"></div>
<div class="a" style="left:510px;top:217px;width:8px;height:8px;background:#c3f7ba;border:1px solid #6c9c5a"></div>
<span class="t" style="left:418px;top:230px;font-size:11px;letter-spacing:0.15px;color:#000">QW 102</span>
<div class="a" style="left:417px;top:241px;width:84px;height:1px;background:#3a2020"></div>
<div class="a" style="left:402px;top:231px;width:8px;height:8px;background:#c3f7ba;border:1px solid #6c9c5a"></div>
<div class="a" style="left:510px;top:230px;width:8px;height:8px;background:#c3f7ba;border:1px solid #6c9c5a"></div>
<span class="t" style="left:413px;top:243px;width:90px;text-align:center;font-size:11px;letter-spacing:0.15px;color:#000">Cpu Address:0</span>
<div class="a" style="left:417px;top:254px;width:84px;height:1px;background:#3a2020"></div>
<span class="t" style="left:413px;top:256px;width:90px;text-align:center;font-size:11px;letter-spacing:0.15px;color:#000">SPEED_PLC</span>
<div class="a" style="left:417px;top:267px;width:84px;height:1px;background:#3a2020"></div>
<div class="a" style="left:402px;top:257px;width:8px;height:8px;background:#c3f7ba;border:1px solid #6c9c5a"></div>
<div class="a" style="left:510px;top:257px;width:8px;height:8px;background:#c3f7ba;border:1px solid #6c9c5a"></div>
<span class="t" style="left:418px;top:269px;font-size:11px;letter-spacing:0.15px;color:#000">IW 100</span>
<span class="t" style="left:462px;top:269px;font-size:11px;letter-spacing:0.15px;color:#000">Q 0.0</span>
<div class="a" style="left:417px;top:280px;width:84px;height:1px;background:#3a2020"></div>
<div class="a" style="left:402px;top:270px;width:8px;height:8px;background:#c6c6c6;border:1px solid #7c7c7c"></div>
<div class="a" style="left:510px;top:270px;width:8px;height:8px;background:#c3f7ba;border:1px solid #6c9c5a"></div>
<span class="t" style="left:418px;top:282px;font-size:11px;letter-spacing:0.15px;color:#000">IW 102</span>
<span class="t" style="left:462px;top:282px;font-size:11px;letter-spacing:0.15px;color:#000">Q 0.0</span>
<div class="a" style="left:417px;top:293px;width:84px;height:1px;background:#3a2020"></div>
<div class="a" style="left:402px;top:284px;width:8px;height:8px;background:#c6c6c6;border:1px solid #7c7c7c"></div>
<div class="a" style="left:510px;top:283px;width:8px;height:8px;background:#c3f7ba;border:1px solid #6c9c5a"></div>
<span class="t" style="left:418px;top:295px;font-size:11px;letter-spacing:0.15px;color:#000">IW 104</span>
<span class="t" style="left:462px;top:295px;font-size:11px;letter-spacing:0.15px;color:#000">Q 0.2</span>
<div class="a" style="left:417px;top:306px;width:84px;height:1px;background:#3a2020"></div>
<div class="a" style="left:402px;top:297px;width:8px;height:8px;background:#c6c6c6;border:1px solid #7c7c7c"></div>
<div class="a" style="left:510px;top:296px;width:8px;height:8px;background:#c3f7ba;border:1px solid #6c9c5a"></div>
<span class="t" style="left:418px;top:308px;font-size:11px;letter-spacing:0.15px;color:#000">IW 106</span>
<span class="t" style="left:462px;top:308px;font-size:11px;letter-spacing:0.15px;color:#000">Q 0.3</span>
<div class="a" style="left:417px;top:319px;width:84px;height:1px;background:#3a2020"></div>
<div class="a" style="left:402px;top:310px;width:8px;height:8px;background:#c6c6c6;border:1px solid #7c7c7c"></div>
<div class="a" style="left:510px;top:309px;width:8px;height:8px;background:#c3f7ba;border:1px solid #6c9c5a"></div>
<span class="t" style="left:418px;top:321px;font-size:11px;letter-spacing:0.15px;color:#000">IW 108</span>
<span class="t" style="left:462px;top:321px;font-size:11px;letter-spacing:0.15px;color:#000">Q 0.4</span>
<div class="a" style="left:417px;top:332px;width:84px;height:1px;background:#3a2020"></div>
<div class="a" style="left:402px;top:323px;width:8px;height:8px;background:#c6c6c6;border:1px solid #7c7c7c"></div>
<div class="a" style="left:510px;top:322px;width:8px;height:8px;background:#c3f7ba;border:1px solid #6c9c5a"></div>
<span class="t" style="left:418px;top:334px;font-size:11px;letter-spacing:0.15px;color:#000">IW 110</span>
<span class="t" style="left:462px;top:334px;font-size:11px;letter-spacing:0.15px;color:#000">Q 0.5</span>
<div class="a" style="left:417px;top:345px;width:84px;height:1px;background:#3a2020"></div>
<div class="a" style="left:402px;top:336px;width:8px;height:8px;background:#c6c6c6;border:1px solid #7c7c7c"></div>
<div class="a" style="left:510px;top:336px;width:8px;height:8px;background:#c3f7ba;border:1px solid #6c9c5a"></div>
<span class="t" style="left:418px;top:347px;font-size:11px;letter-spacing:0.15px;color:#000">IW 112</span>
<span class="t" style="left:462px;top:347px;font-size:11px;letter-spacing:0.15px;color:#000">Q 0.6</span>
<div class="a" style="left:417px;top:358px;width:84px;height:1px;background:#3a2020"></div>
<div class="a" style="left:402px;top:349px;width:8px;height:8px;background:#c6c6c6;border:1px solid #7c7c7c"></div>
<div class="a" style="left:510px;top:349px;width:8px;height:8px;background:#c3f7ba;border:1px solid #6c9c5a"></div>
<span class="t" style="left:418px;top:360px;font-size:11px;letter-spacing:0.15px;color:#000">IW 114</span>
<span class="t" style="left:462px;top:360px;font-size:11px;letter-spacing:0.15px;color:#000">Q 0.7</span>
<div class="a" style="left:417px;top:371px;width:84px;height:1px;background:#3a2020"></div>
<div class="a" style="left:402px;top:362px;width:8px;height:8px;background:#c6c6c6;border:1px solid #7c7c7c"></div>
<div class="a" style="left:510px;top:362px;width:8px;height:8px;background:#c3f7ba;border:1px solid #6c9c5a"></div>
<span class="t" style="left:418px;top:373px;font-size:11px;letter-spacing:0.15px;color:#000">Stop</span>
<span class="t" style="left:462px;top:373px;font-size:11px;letter-spacing:0.15px;color:#000">Stop</span>
<div class="a" style="left:402px;top:376px;width:8px;height:8px;background:#ffb6b6;border:1px solid #a86868"></div>
<div class="a" style="left:510px;top:375px;width:8px;height:8px;background:#ffb6b6;border:1px solid #a86868"></div>
<div class="a" style="left:1547px;top:96px;width:40px;height:305px;background:linear-gradient(90deg,#9a9a9a,#c8c8c8 30%,#c4c4c4);border-top:1px solid #ececec;border-right:1px solid #f4f4f4;border-bottom:1px solid #ececec"></div>
<div class="a" style="left:1565px;top:111px;width:21px;height:275px;background:#e8e8e8"></div>
<div class="a" style="left:1554px;top:113px;width:7px;height:7px;background:#c6e2b8"></div>
<div class="a" style="left:1569px;top:124px;width:17px;height:1px;background:#c4c4c4"></div>
<div class="a" style="left:1554px;top:126px;width:7px;height:7px;background:#c6e2b8"></div>
<div class="a" style="left:1569px;top:137px;width:17px;height:1px;background:#c4c4c4"></div>
<div class="a" style="left:1554px;top:139px;width:7px;height:7px;background:#c6e2b8"></div>
<div class="a" style="left:1569px;top:150px;width:17px;height:1px;background:#c4c4c4"></div>
<div class="a" style="left:1554px;top:152px;width:7px;height:7px;background:#c6e2b8"></div>
<div class="a" style="left:1569px;top:163px;width:17px;height:1px;background:#c4c4c4"></div>
<div class="a" style="left:1554px;top:166px;width:7px;height:7px;background:#c6e2b8"></div>
<div class="a" style="left:1569px;top:176px;width:17px;height:1px;background:#c4c4c4"></div>
<div class="a" style="left:1554px;top:179px;width:7px;height:7px;background:#c6e2b8"></div>
<div class="a" style="left:1569px;top:189px;width:17px;height:1px;background:#c4c4c4"></div>
<div class="a" style="left:1554px;top:192px;width:7px;height:7px;background:#c6e2b8"></div>
<div class="a" style="left:1569px;top:202px;width:17px;height:1px;background:#c4c4c4"></div>
<div class="a" style="left:1554px;top:205px;width:7px;height:7px;background:#c6e2b8"></div>
<div class="a" style="left:1569px;top:215px;width:17px;height:1px;background:#c4c4c4"></div>
<div class="a" style="left:1554px;top:218px;width:7px;height:7px;background:#c6e2b8"></div>
<div class="a" style="left:1569px;top:228px;width:17px;height:1px;background:#c4c4c4"></div>
<div class="a" style="left:1554px;top:231px;width:7px;height:7px;background:#c6e2b8"></div>
<div class="a" style="left:1569px;top:241px;width:17px;height:1px;background:#c4c4c4"></div>
<div class="a" style="left:1569px;top:254px;width:17px;height:1px;background:#c4c4c4"></div>
<div class="a" style="left:1554px;top:258px;width:7px;height:7px;background:#c6e2b8"></div>
<div class="a" style="left:1569px;top:267px;width:17px;height:1px;background:#c4c4c4"></div>
<div class="a" style="left:1554px;top:271px;width:7px;height:7px;background:#c6e2b8"></div>
<div class="a" style="left:1569px;top:280px;width:17px;height:1px;background:#c4c4c4"></div>
<div class="a" style="left:1554px;top:284px;width:7px;height:7px;background:#c6e2b8"></div>
<div class="a" style="left:1569px;top:293px;width:17px;height:1px;background:#c4c4c4"></div>
<div class="a" style="left:1554px;top:297px;width:7px;height:7px;background:#c6e2b8"></div>
<div class="a" style="left:1569px;top:306px;width:17px;height:1px;background:#c4c4c4"></div>
<div class="a" style="left:1554px;top:310px;width:7px;height:7px;background:#c6e2b8"></div>
<div class="a" style="left:1569px;top:319px;width:17px;height:1px;background:#c4c4c4"></div>
<div class="a" style="left:1554px;top:323px;width:7px;height:7px;background:#c6e2b8"></div>
<div class="a" style="left:1569px;top:332px;width:17px;height:1px;background:#c4c4c4"></div>
<div class="a" style="left:1554px;top:337px;width:7px;height:7px;background:#c6e2b8"></div>
<div class="a" style="left:1569px;top:345px;width:17px;height:1px;background:#c4c4c4"></div>
<div class="a" style="left:1554px;top:350px;width:7px;height:7px;background:#c6e2b8"></div>
<div class="a" style="left:1569px;top:358px;width:17px;height:1px;background:#c4c4c4"></div>
<div class="a" style="left:1554px;top:363px;width:7px;height:7px;background:#c6e2b8"></div>
<div class="a" style="left:1569px;top:371px;width:17px;height:1px;background:#c4c4c4"></div>
<div class="a" style="left:1554px;top:376px;width:7px;height:7px;background:#f5c4c4"></div>
<div class="a" style="left:527px;top:97px;width:1019px;height:636px;background:#f0f0f0;box-shadow:0 0 20px rgba(0,0,0,.43)"></div>
<div class="a" style="left:527px;top:97px;width:1019px;height:26px;background:#fff;border-top:1px solid #a4a4a4"></div>
<div class="a" style="left:527px;top:97px;width:1px;height:636px;background:#9a9a9a"></div>
<svg class="a" style="left:533px;top:101px" width="12" height="17" viewBox="0 0 12 17"><rect x="2.5" y="1.5" width="7" height="13.5" rx="1" fill="#ededed" stroke="#a6a6a6"/><rect x="4.500" y="3.500" width="3" height="11" fill="#f8f8f8" stroke="#c4c4c4" stroke-width=".6"/><rect x="5" y="2.800" width="2" height="2" rx=".8" fill="#5cc83c"/><rect x="3" y="15" width="6" height="1" fill="#444"/><path d="M1 16.500H11" stroke="#444" stroke-width="1"/></svg>
<span class="t" style="left:552px;top:103px;font-size:12px;line-height:15px;height:15px;letter-spacing:0.092px">Modül Özellikleri</span>
<svg class="a" style="left:1525px;top:104px" width="12" height="12" viewBox="0 0 12 12"><path d="M1 1L11 11M11 1L1 11" stroke="#000" stroke-width="1.1" fill="none"/></svg>
<div class="a" style="left:540px;top:155px;width:995px;height:521px;background:#fff;border:1px solid #dcdcdc"></div>
<div class="a" style="left:540px;top:134px;width:131px;height:22px;background:#fff;border:1px solid #dcdcdc;border-bottom:none"></div>
<span class="t x" style="left:548px;top:139px;letter-spacing:-0.283px;">STM 407 (SC-01612-00)</span>
<div class="g" style="left:553px;top:170px;width:313px;height:138px"></div>
<span class="gl x" style="left:560px;top:164px;background:#fff;letter-spacing:-0.256px;">Genel Ayarlar</span>
<span class="t x" style="left:566px;top:188px;letter-spacing:-0.225px;">Plc Adresi:</span>
<div class="nud" style="left:631px;top:184px;width:45px;height:20px"><span class="v x" style="">0</span><div class="b"><i class="u"></i><i class="d"></i></div></div>
<span class="t x" style="left:698px;top:188px;letter-spacing:-0.174px;">Maks. Saykıl Z.:</span>
<div class="nud" style="left:783px;top:183px;width:53px;height:20px"><span class="v x" style="">100</span><div class="b"><i class="u"></i><i class="d"></i></div></div>
<span class="t x" style="left:839px;top:188px;letter-spacing:-0.158px;">Ms.</span>
<div class="cb" style="left:566px;top:221px"></div>
<span class="t x" style="left:585px;top:215px;letter-spacing:-0.376px;">Yazma</span>
<span class="t x" style="left:585px;top:228px;letter-spacing:-0.577px;">Korumalı</span>
<div class="cb" style="left:663px;top:221px"></div>
<span class="t x" style="left:682px;top:215px;letter-spacing:-0.362px;">Okuma-Yazma</span>
<span class="t x" style="left:682px;top:228px;letter-spacing:-0.577px;">Korumalı</span>
<span class="t x" style="left:775px;top:209px;letter-spacing:-0.416px;">Şifre:</span>
<div class="dtb" style="left:772px;top:225px;width:83px;height:20px"><span class="v x" style=""></span></div>
<div class="g" style="left:563px;top:257px;width:292px;height:41px"></div>
<span class="gl x" style="left:570px;top:251px;background:#fff;letter-spacing:-0.379px;">Plc Açılış Çalışma Modu</span>
<div class="rb on" style="left:568px;top:271px"></div>
<span class="t x" style="left:587px;top:272px;letter-spacing:-0.426px;">Son Çalışma Modu</span>
<div class="rb" style="left:691px;top:271px"></div>
<span class="t x" style="left:710px;top:272px;letter-spacing:-0.338px;">Stop</span>
<div class="rb" style="left:749px;top:271px"></div>
<span class="t x" style="left:768px;top:272px;letter-spacing:-0.563px;">Çalışır Konumda</span>
<div class="g" style="left:553px;top:320px;width:313px;height:81px"></div>
<span class="gl x" style="left:560px;top:314px;background:#fff;letter-spacing:-0.266px;">Seri Port (Modbus Rtu) 0</span>
<div class="cb" style="left:568px;top:334px"><svg width="11" height="11" viewBox="0 0 11 11"><path d="M1 5.3 L3.9 8.3 L9.8 2.2" fill="none" stroke="#3a3a3a" stroke-width="1.2"/></svg></div>
<span class="t x" style="left:587px;top:335px;letter-spacing:-0.187px;">Portu Aktif Et</span>
<span class="t x" style="left:569px;top:356px;letter-spacing:-0.243px;">Baudrate:</span>
<span class="t x" style="left:663px;top:356px;letter-spacing:-0.279px;">Parity:</span>
<span class="t x" style="left:753px;top:356px;letter-spacing:-0.227px;">Stop Bits:</span>
<span class="t x" style="left:810px;top:356px;letter-spacing:-0.173px;">Data Bits:</span>
<div class="cmb" style="left:569px;top:371px;width:81px;"><span class="v x" style="letter-spacing:-0.107px;">115200</span><svg width="9" height="6" viewBox="0 0 9 6"><path d="M0.5 0.7 L4.5 4.7 L8.5 0.7" fill="none" stroke="#444" stroke-width="1"/></svg></div>
<div class="cmb" style="left:660px;top:371px;width:81px;"><span class="v x" style="letter-spacing:-0.245px;">None</span><svg width="9" height="6" viewBox="0 0 9 6"><path d="M0.5 0.7 L4.5 4.7 L8.5 0.7" fill="none" stroke="#444" stroke-width="1"/></svg></div>
<div class="cmb" style="left:751px;top:371px;width:47px;"><span class="v x" style="">1</span><svg width="9" height="6" viewBox="0 0 9 6"><path d="M0.5 0.7 L4.5 4.7 L8.5 0.7" fill="none" stroke="#444" stroke-width="1"/></svg></div>
<div class="cmb" style="left:808px;top:371px;width:47px;"><span class="v x" style="">8</span><svg width="9" height="6" viewBox="0 0 9 6"><path d="M0.5 0.7 L4.5 4.7 L8.5 0.7" fill="none" stroke="#444" stroke-width="1"/></svg></div>
<div class="g" style="left:553px;top:413px;width:313px;height:81px"></div>
<span class="gl x" style="left:560px;top:407px;background:#fff;letter-spacing:-0.266px;">Seri Port (Modbus Rtu) 1</span>
<div class="cb" style="left:568px;top:427px"><svg width="11" height="11" viewBox="0 0 11 11"><path d="M1 5.3 L3.9 8.3 L9.8 2.2" fill="none" stroke="#3a3a3a" stroke-width="1.2"/></svg></div>
<span class="t x" style="left:587px;top:428px;letter-spacing:-0.187px;">Portu Aktif Et</span>
<span class="t x" style="left:569px;top:449px;letter-spacing:-0.243px;">Baudrate:</span>
<span class="t x" style="left:663px;top:449px;letter-spacing:-0.279px;">Parity:</span>
<span class="t x" style="left:753px;top:449px;letter-spacing:-0.227px;">Stop Bits:</span>
<span class="t x" style="left:810px;top:449px;letter-spacing:-0.173px;">Data Bits:</span>
<div class="cmb" style="left:569px;top:464px;width:81px;"><span class="v x" style="letter-spacing:-0.107px;">115200</span><svg width="9" height="6" viewBox="0 0 9 6"><path d="M0.5 0.7 L4.5 4.7 L8.5 0.7" fill="none" stroke="#444" stroke-width="1"/></svg></div>
<div class="cmb" style="left:660px;top:464px;width:81px;"><span class="v x" style="letter-spacing:-0.245px;">None</span><svg width="9" height="6" viewBox="0 0 9 6"><path d="M0.5 0.7 L4.5 4.7 L8.5 0.7" fill="none" stroke="#444" stroke-width="1"/></svg></div>
<div class="cmb" style="left:751px;top:464px;width:47px;"><span class="v x" style="">1</span><svg width="9" height="6" viewBox="0 0 9 6"><path d="M0.5 0.7 L4.5 4.7 L8.5 0.7" fill="none" stroke="#444" stroke-width="1"/></svg></div>
<div class="cmb" style="left:808px;top:464px;width:47px;"><span class="v x" style="">8</span><svg width="9" height="6" viewBox="0 0 9 6"><path d="M0.5 0.7 L4.5 4.7 L8.5 0.7" fill="none" stroke="#444" stroke-width="1"/></svg></div>
<div class="g" style="left:553px;top:507px;width:313px;height:157px"></div>
<span class="gl x" style="left:560px;top:501px;background:#fff;letter-spacing:-0.459px;">Kesme Ayarları</span>
<span class="t x" style="left:571px;top:528px;letter-spacing:-0.368px;">Zaman Bazlı Kesme Zamanı (Ms.):</span>
<div class="nud" style="left:803px;top:525px;width:53px;height:20px"><span class="v x" style="">0</span><div class="b"><i class="u"></i><i class="d"></i></div></div>
<span class="t x" style="left:571px;top:554px;letter-spacing:-0.294px;">Kesme Kontrol Flag Adresi:</span>
<div class="nud" style="left:803px;top:551px;width:53px;height:20px"><span class="v x" style="">0</span><div class="b"><i class="u"></i><i class="d"></i></div></div>
<span class="t x" style="left:571px;top:579px;letter-spacing:-0.001px;">I 0.0</span>
<div class="dtb c" style="left:569px;top:594px;width:54px;height:20px"><span class="v x" style="letter-spacing:-0.170px;">F 0.0</span></div>
<span class="t x" style="left:648px;top:579px;letter-spacing:-0.001px;">I 0.1</span>
<div class="dtb c" style="left:646px;top:594px;width:54px;height:20px"><span class="v x" style="letter-spacing:-0.170px;">F 0.0</span></div>
<span class="t x" style="left:726px;top:579px;letter-spacing:-0.001px;">I 0.2</span>
<div class="dtb c" style="left:724px;top:594px;width:54px;height:20px"><span class="v x" style="letter-spacing:-0.170px;">F 0.0</span></div>
<span class="t x" style="left:803px;top:579px;letter-spacing:-0.001px;">I 0.3</span>
<div class="dtb c" style="left:801px;top:594px;width:54px;height:20px"><span class="v x" style="letter-spacing:-0.170px;">F 0.0</span></div>
<span class="t x" style="left:571px;top:621px;letter-spacing:-0.001px;">I 0.4</span>
<div class="dtb c" style="left:569px;top:636px;width:54px;height:20px"><span class="v x" style="letter-spacing:-0.170px;">F 0.0</span></div>
<span class="t x" style="left:648px;top:621px;letter-spacing:-0.001px;">I 0.5</span>
<div class="dtb c" style="left:646px;top:636px;width:54px;height:20px"><span class="v x" style="letter-spacing:-0.170px;">F 0.0</span></div>
<span class="t x" style="left:726px;top:621px;letter-spacing:-0.001px;">I 0.6</span>
<div class="dtb c" style="left:724px;top:636px;width:54px;height:20px"><span class="v x" style="letter-spacing:-0.170px;">F 0.0</span></div>
<span class="t x" style="left:803px;top:621px;letter-spacing:-0.392px;">Zaman Bazlı</span>
<div class="dtb c" style="left:801px;top:636px;width:54px;height:20px"><span class="v x" style="letter-spacing:-0.170px;">F 0.0</span></div>
<div class="g" style="left:872px;top:170px;width:313px;height:494px"></div>
<span class="gl x" style="left:879px;top:164px;background:#fff;letter-spacing:0.009px;">Ethernet (Modbus Tcp/Ip)</span>
<div class="cb" style="left:893px;top:185px"><svg width="11" height="11" viewBox="0 0 11 11"><path d="M1 5.3 L3.9 8.3 L9.8 2.2" fill="none" stroke="#3a3a3a" stroke-width="1.2"/></svg></div>
<span class="t x" style="left:912px;top:186px;letter-spacing:-0.178px;">Ethernet Aktif Et</span>
<span class="t x" style="left:886px;top:209px;letter-spacing:-0.245px;">Sunucu İsmi:</span>
<div class="tb" style="left:886px;top:224px;width:121px"><span class="v x" style="letter-spacing:-0.365px;">SPEED_PLC</span></div>
<div class="g" style="left:885px;top:258px;width:284px;height:168px"></div>
<span class="gl x" style="left:892px;top:252px;background:#fff;letter-spacing:-0.429px;">DHCP</span>
<div class="cb" style="left:896px;top:271px"></div>
<span class="t x" style="left:915px;top:272px;letter-spacing:-0.165px;">DHCP Aktif Et</span>
<span class="t x" style="left:896px;top:292px;letter-spacing:0.027px;">IPv4:</span>
<div class="nud" style="left:977px;top:289px;width:42px;height:20px"><span class="v x" style="letter-spacing:-0.094px;">192</span><div class="b"><i class="u"></i><i class="d"></i></div></div>
<div class="nud" style="left:1025px;top:289px;width:42px;height:20px"><span class="v x" style="letter-spacing:-0.094px;">168</span><div class="b"><i class="u"></i><i class="d"></i></div></div>
<div class="nud" style="left:1073px;top:289px;width:42px;height:20px"><span class="v x" style="">0</span><div class="b"><i class="u"></i><i class="d"></i></div></div>
<div class="nud" style="left:1121px;top:289px;width:42px;height:20px"><span class="v x" style="">10</span><div class="b"><i class="u"></i><i class="d"></i></div></div>
<span class="t x" style="left:896px;top:319px;letter-spacing:-0.054px;">IP Mask:</span>
<div class="nud" style="left:977px;top:316px;width:42px;height:20px"><span class="v x" style="letter-spacing:-0.094px;">255</span><div class="b"><i class="u"></i><i class="d"></i></div></div>
<div class="nud" style="left:1025px;top:316px;width:42px;height:20px"><span class="v x" style="letter-spacing:-0.094px;">255</span><div class="b"><i class="u"></i><i class="d"></i></div></div>
<div class="nud" style="left:1073px;top:316px;width:42px;height:20px"><span class="v x" style="letter-spacing:-0.094px;">255</span><div class="b"><i class="u"></i><i class="d"></i></div></div>
<div class="nud" style="left:1121px;top:316px;width:42px;height:20px"><span class="v x" style="">0</span><div class="b"><i class="u"></i><i class="d"></i></div></div>
<span class="t x" style="left:896px;top:346px;letter-spacing:-0.223px;">Ağ Geçiti</span>
<div class="nud" style="left:977px;top:343px;width:42px;height:20px"><span class="v x" style="letter-spacing:-0.094px;">192</span><div class="b"><i class="u"></i><i class="d"></i></div></div>
<div class="nud" style="left:1025px;top:343px;width:42px;height:20px"><span class="v x" style="letter-spacing:-0.094px;">168</span><div class="b"><i class="u"></i><i class="d"></i></div></div>
<div class="nud" style="left:1073px;top:343px;width:42px;height:20px"><span class="v x" style="">0</span><div class="b"><i class="u"></i><i class="d"></i></div></div>
<div class="nud" style="left:1121px;top:343px;width:42px;height:20px"><span class="v x" style="">1</span><div class="b"><i class="u"></i><i class="d"></i></div></div>
<span class="t x" style="left:896px;top:373px;letter-spacing:-0.229px;">Birincil DNS:</span>
<div class="nud" style="left:977px;top:370px;width:42px;height:20px"><span class="v x" style="letter-spacing:-0.094px;">192</span><div class="b"><i class="u"></i><i class="d"></i></div></div>
<div class="nud" style="left:1025px;top:370px;width:42px;height:20px"><span class="v x" style="letter-spacing:-0.094px;">168</span><div class="b"><i class="u"></i><i class="d"></i></div></div>
<div class="nud" style="left:1073px;top:370px;width:42px;height:20px"><span class="v x" style="">0</span><div class="b"><i class="u"></i><i class="d"></i></div></div>
<div class="nud" style="left:1121px;top:370px;width:42px;height:20px"><span class="v x" style="">1</span><div class="b"><i class="u"></i><i class="d"></i></div></div>
<span class="t x" style="left:896px;top:400px;letter-spacing:-0.068px;">İkincil DNS:</span>
<div class="nud" style="left:977px;top:397px;width:42px;height:20px"><span class="v x" style="">0</span><div class="b"><i class="u"></i><i class="d"></i></div></div>
<div class="nud" style="left:1025px;top:397px;width:42px;height:20px"><span class="v x" style="">0</span><div class="b"><i class="u"></i><i class="d"></i></div></div>
<div class="nud" style="left:1073px;top:397px;width:42px;height:20px"><span class="v x" style="">0</span><div class="b"><i class="u"></i><i class="d"></i></div></div>
<div class="nud" style="left:1121px;top:397px;width:42px;height:20px"><span class="v x" style="">0</span><div class="b"><i class="u"></i><i class="d"></i></div></div>
<div class="g" style="left:885px;top:439px;width:284px;height:68px"></div>
<span class="gl x" style="left:892px;top:433px;background:#fff;letter-spacing:-0.182px;">TCP Sunucu</span>
<div class="cb" style="left:895px;top:453px"><svg width="11" height="11" viewBox="0 0 11 11"><path d="M1 5.3 L3.9 8.3 L9.8 2.2" fill="none" stroke="#3a3a3a" stroke-width="1.2"/></svg></div>
<span class="t x" style="left:914px;top:454px;letter-spacing:-0.176px;">TCP Server Aktif Et</span>
<span class="t x" style="left:895px;top:477px;letter-spacing:-0.240px;">Port No:</span>
<div class="nud" style="left:953px;top:473px;width:52px;height:20px"><span class="v x" style="letter-spacing:0.051px;">502</span><div class="b"><i class="u"></i><i class="d"></i></div></div>
<span class="t x" style="left:1017px;top:477px;letter-spacing:-0.427px;">Zaman Aşımı (sn):</span>
<div class="nud" style="left:1110px;top:473px;width:52px;height:20px"><span class="v x" style="">10</span><div class="b"><i class="u"></i><i class="d"></i></div></div>
<div class="g" style="left:885px;top:521px;width:284px;height:134px"></div>
<span class="gl x" style="left:892px;top:515px;background:#fff;letter-spacing:-0.101px;">WEB Sunucu</span>
<div class="cb" style="left:895px;top:534px"><svg width="11" height="11" viewBox="0 0 11 11"><path d="M1 5.3 L3.9 8.3 L9.8 2.2" fill="none" stroke="#3a3a3a" stroke-width="1.2"/></svg></div>
<span class="t x" style="left:914px;top:535px;letter-spacing:-0.139px;">WEB Server Aktif Et</span>
<span class="t x" style="left:1031px;top:535px;letter-spacing:-0.092px;">Tip:</span>
<div class="cmb" style="left:1067px;top:529px;width:96px;"><span class="v x" style="letter-spacing:-0.399px;">SOYŞY Sistem</span><svg width="9" height="6" viewBox="0 0 9 6"><path d="M0.5 0.7 L4.5 4.7 L8.5 0.7" fill="none" stroke="#444" stroke-width="1"/></svg></div>
<span class="t x" style="left:895px;top:558px;letter-spacing:-0.240px;">Port No:</span>
<div class="nud" style="left:953px;top:554px;width:52px;height:20px"><span class="v x" style="">80</span><div class="b"><i class="u"></i><i class="d"></i></div></div>
<span class="t x" style="left:1017px;top:558px;letter-spacing:-0.427px;">Zaman Aşımı (sn):</span>
<div class="nud" style="left:1110px;top:554px;width:52px;height:20px"><span class="v x" style="">30</span><div class="b"><i class="u"></i><i class="d"></i></div></div>
<span class="t x" style="left:895px;top:580px;letter-spacing:-0.285px;">Yönetici Kullanıcı Adı:</span>
<span class="t x" style="left:1042px;top:580px;letter-spacing:-0.264px;">Yönetici Şifresi:</span>
<div class="tb" style="left:895px;top:596px;width:120px"><span class="v x" style="letter-spacing:-0.365px;">SPEED_PLC</span></div>
<div class="tb" style="left:1042px;top:596px;width:120px"><span class="v x" style="">123</span></div>
<div class="btn" style="left:897px;top:623px;width:78px;"><span class="x" style="display:inline-block">Yükle</span></div>
<div class="btn" style="left:991px;top:623px;width:78px;"><span class="x" style="display:inline-block">İndir</span></div>
<div class="btn" style="left:1083px;top:623px;width:78px;"><span class="x" style="display:inline-block">Sil</span></div>
<div class="a" style="left:1186px;top:163px;width:340px;height:503px;overflow:hidden;background:#fff">
<div class="g" style="left:6px;top:7px;width:313px;height:62px"></div>
<span class="gl x" style="left:13px;top:1px;background:#fff;letter-spacing:-0.392px;">Dijital Giriş Çıkış Adresleri:</span>
<span class="t x" style="left:18px;top:21px;letter-spacing:-0.310px;">Giriş Adresi:</span>
<div class="nud" style="left:196px;top:15px;width:53px;height:20px"><span class="v x" style="">0</span><div class="b"><i class="u"></i><i class="d"></i></div></div>
<div class="nud dis" style="left:255px;top:15px;width:53px;height:20px"><span class="v x" style="">0</span><div class="b"><i class="u"></i><i class="d"></i></div></div>
<span class="t x" style="left:18px;top:46px;letter-spacing:-0.390px;">Çıkış Adresi</span>
<div class="nud" style="left:196px;top:40px;width:53px;height:20px"><span class="v x" style="">0</span><div class="b"><i class="u"></i><i class="d"></i></div></div>
<div class="nud dis" style="left:255px;top:40px;width:53px;height:20px"><span class="v x" style="">0</span><div class="b"><i class="u"></i><i class="d"></i></div></div>
<div class="g" style="left:7px;top:83px;width:313px;height:351px"></div>
<span class="gl x" style="left:14px;top:77px;background:#fff;letter-spacing:-0.381px;">Dijital Girişler</span>
<span class="t x" style="left:16px;top:95px;letter-spacing:-0.224px;">0.Kanal Giriş Tipi:</span>
<span class="t x" style="left:187px;top:95px;letter-spacing:-0.251px;">Bit Adresi:</span>
<span class="t x" style="left:256px;top:95px;letter-spacing:-0.039px;">Word Adr.:</span>
<div class="cmb" style="left:16px;top:110px;width:154px;background:#cce4f7;border-color:#0078d7"><span class="v x" style="letter-spacing:-0.143px;">ABZ Enkoder 2X</span><svg width="9" height="6" viewBox="0 0 9 6"><path d="M0.5 0.7 L4.5 4.7 L8.5 0.7" fill="none" stroke="#444" stroke-width="1"/></svg></div>
<div class="dtb" style="left:187px;top:110px;width:53px;height:20px"><span class="v x" style="letter-spacing:-0.001px;">I 0.0</span></div>
<div class="dtb" style="left:256px;top:110px;width:53px;height:20px"><span class="v x" style="letter-spacing:0.219px;">ID 116</span></div>
<span class="t x" style="left:16px;top:137px;letter-spacing:-0.224px;">1.Kanal Giriş Tipi:</span>
<span class="t x" style="left:187px;top:137px;letter-spacing:-0.251px;">Bit Adresi:</span>
<span class="t x" style="left:256px;top:137px;letter-spacing:-0.039px;">Word Adr.:</span>
<div class="cmb" style="left:16px;top:152px;width:154px;"><span class="v x" style="letter-spacing:-0.349px;">Dijital Giriş</span><svg width="9" height="6" viewBox="0 0 9 6"><path d="M0.5 0.7 L4.5 4.7 L8.5 0.7" fill="none" stroke="#444" stroke-width="1"/></svg></div>
<div class="dtb" style="left:187px;top:152px;width:53px;height:20px"><span class="v x" style=""></span></div>
<div class="dtb" style="left:256px;top:152px;width:53px;height:20px"><span class="v x" style=""></span></div>
<span class="t x" style="left:16px;top:179px;letter-spacing:-0.224px;">2.Kanal Giriş Tipi:</span>
<span class="t x" style="left:187px;top:179px;letter-spacing:-0.251px;">Bit Adresi:</span>
<span class="t x" style="left:256px;top:179px;letter-spacing:-0.039px;">Word Adr.:</span>
<div class="cmb" style="left:16px;top:194px;width:154px;"><span class="v x" style="letter-spacing:-0.349px;">Dijital Giriş</span><svg width="9" height="6" viewBox="0 0 9 6"><path d="M0.5 0.7 L4.5 4.7 L8.5 0.7" fill="none" stroke="#444" stroke-width="1"/></svg></div>
<div class="dtb" style="left:187px;top:194px;width:53px;height:20px"><span class="v x" style=""></span></div>
<div class="dtb" style="left:256px;top:194px;width:53px;height:20px"><span class="v x" style=""></span></div>
<span class="t x" style="left:16px;top:221px;letter-spacing:-0.224px;">3.Kanal Giriş Tipi:</span>
<span class="t x" style="left:187px;top:221px;letter-spacing:-0.251px;">Bit Adresi:</span>
<span class="t x" style="left:256px;top:221px;letter-spacing:-0.039px;">Word Adr.:</span>
<div class="cmb" style="left:16px;top:236px;width:154px;"><span class="v x" style="letter-spacing:-0.349px;">Dijital Giriş</span><svg width="9" height="6" viewBox="0 0 9 6"><path d="M0.5 0.7 L4.5 4.7 L8.5 0.7" fill="none" stroke="#444" stroke-width="1"/></svg></div>
<div class="dtb" style="left:187px;top:236px;width:53px;height:20px"><span class="v x" style=""></span></div>
<div class="dtb" style="left:256px;top:236px;width:53px;height:20px"><span class="v x" style=""></span></div>
<span class="t x" style="left:16px;top:263px;letter-spacing:-0.224px;">4.Kanal Giriş Tipi:</span>
<span class="t x" style="left:187px;top:263px;letter-spacing:-0.251px;">Bit Adresi:</span>
<span class="t x" style="left:256px;top:263px;letter-spacing:-0.039px;">Word Adr.:</span>
<div class="cmb" style="left:16px;top:278px;width:154px;"><span class="v x" style="letter-spacing:-0.349px;">Dijital Giriş</span><svg width="9" height="6" viewBox="0 0 9 6"><path d="M0.5 0.7 L4.5 4.7 L8.5 0.7" fill="none" stroke="#444" stroke-width="1"/></svg></div>
<div class="dtb" style="left:187px;top:278px;width:53px;height:20px"><span class="v x" style=""></span></div>
<div class="dtb" style="left:256px;top:278px;width:53px;height:20px"><span class="v x" style=""></span></div>
<span class="t x" style="left:16px;top:305px;letter-spacing:-0.224px;">5.Kanal Giriş Tipi:</span>
<span class="t x" style="left:187px;top:305px;letter-spacing:-0.251px;">Bit Adresi:</span>
<span class="t x" style="left:256px;top:305px;letter-spacing:-0.039px;">Word Adr.:</span>
<div class="cmb" style="left:16px;top:320px;width:154px;"><span class="v x" style="letter-spacing:-0.349px;">Dijital Giriş</span><svg width="9" height="6" viewBox="0 0 9 6"><path d="M0.5 0.7 L4.5 4.7 L8.5 0.7" fill="none" stroke="#444" stroke-width="1"/></svg></div>
<div class="dtb" style="left:187px;top:320px;width:53px;height:20px"><span class="v x" style=""></span></div>
<div class="dtb" style="left:256px;top:320px;width:53px;height:20px"><span class="v x" style=""></span></div>
<span class="t x" style="left:16px;top:347px;letter-spacing:-0.224px;">6.Kanal Giriş Tipi:</span>
<span class="t x" style="left:187px;top:347px;letter-spacing:-0.251px;">Bit Adresi:</span>
<span class="t x" style="left:256px;top:347px;letter-spacing:-0.039px;">Word Adr.:</span>
<div class="cmb" style="left:16px;top:362px;width:154px;"><span class="v x" style="letter-spacing:-0.349px;">Dijital Giriş</span><svg width="9" height="6" viewBox="0 0 9 6"><path d="M0.5 0.7 L4.5 4.7 L8.5 0.7" fill="none" stroke="#444" stroke-width="1"/></svg></div>
<div class="dtb" style="left:187px;top:362px;width:53px;height:20px"><span class="v x" style="letter-spacing:-0.001px;">I 0.6</span></div>
<div class="dtb" style="left:256px;top:362px;width:53px;height:20px"><span class="v x" style=""></span></div>
<span class="t x" style="left:16px;top:389px;letter-spacing:-0.224px;">7.Kanal Giriş Tipi:</span>
<span class="t x" style="left:187px;top:389px;letter-spacing:-0.251px;">Bit Adresi:</span>
<span class="t x" style="left:256px;top:389px;letter-spacing:-0.039px;">Word Adr.:</span>
<div class="cmb" style="left:16px;top:404px;width:154px;"><span class="v x" style="letter-spacing:-0.349px;">Dijital Giriş</span><svg width="9" height="6" viewBox="0 0 9 6"><path d="M0.5 0.7 L4.5 4.7 L8.5 0.7" fill="none" stroke="#444" stroke-width="1"/></svg></div>
<div class="dtb" style="left:187px;top:404px;width:53px;height:20px"><span class="v x" style="letter-spacing:-0.001px;">I 0.7</span></div>
<div class="dtb" style="left:256px;top:404px;width:53px;height:20px"><span class="v x" style=""></span></div>
<div class="g" style="left:6px;top:447px;width:313px;height:120px"></div>
<span class="gl x" style="left:13px;top:441px;background:#fff;letter-spacing:-0.466px;">Dijital Çıkışlar</span>
<span class="t x" style="left:16px;top:459px;letter-spacing:-0.197px;">0.Kanal Tipi:</span>
<span class="t x" style="left:118px;top:459px;letter-spacing:-0.211px;">Frekans Adr.:</span>
<span class="t x" style="left:186px;top:459px;letter-spacing:-0.251px;">Bit Adresi:</span>
<span class="t x" style="left:255px;top:459px;letter-spacing:-0.039px;">Word Adr.:</span>
<div class="cmb" style="left:15px;top:474px;width:91px;"><span class="v x" style="letter-spacing:-0.412px;">Dijital Çıkış</span><svg width="9" height="6" viewBox="0 0 9 6"><path d="M0.5 0.7 L4.5 4.7 L8.5 0.7" fill="none" stroke="#444" stroke-width="1"/></svg></div>
<div class="dtb" style="left:118px;top:474px;width:53px;height:20px"><span class="v x" style=""></span></div>
<div class="dtb" style="left:186px;top:474px;width:53px;height:20px"><span class="v x" style="letter-spacing:0.064px;">Q 0.0</span></div>
<div class="dtb" style="left:255px;top:474px;width:53px;height:20px"><span class="v x" style=""></span></div>
<span class="t x" style="left:16px;top:501px;letter-spacing:-0.197px;">1.Kanal Tipi:</span>
<span class="t x" style="left:118px;top:501px;letter-spacing:-0.211px;">Frekans Adr.:</span>
<span class="t x" style="left:186px;top:501px;letter-spacing:-0.251px;">Bit Adresi:</span>
<span class="t x" style="left:255px;top:501px;letter-spacing:-0.039px;">Word Adr.:</span>
<div class="cmb" style="left:15px;top:516px;width:91px;"><span class="v x" style="letter-spacing:-0.412px;">Dijital Çıkış</span><svg width="9" height="6" viewBox="0 0 9 6"><path d="M0.5 0.7 L4.5 4.7 L8.5 0.7" fill="none" stroke="#444" stroke-width="1"/></svg></div>
<div class="dtb" style="left:118px;top:516px;width:53px;height:20px"><span class="v x" style=""></span></div>
<div class="dtb" style="left:186px;top:516px;width:53px;height:20px"><span class="v x" style="letter-spacing:0.064px;">Q 0.1</span></div>
<div class="dtb" style="left:255px;top:516px;width:53px;height:20px"><span class="v x" style=""></span></div>
<div class="a" style="left:324px;top:0;width:16px;height:503px;background:#f0f0f0"></div>
<div class="a" style="left:324px;top:17px;width:15px;height:200px;background:#cdcdcd"></div>
<svg class="a" style="left:327px;top:6px" width="9" height="6" viewBox="0 0 9 6"><path d="M0.7 5 L4.5 1.2 L8.3 5" fill="none" stroke="#555" stroke-width="2"/></svg>
<svg class="a" style="left:327px;top:492px" width="9" height="6" viewBox="0 0 9 6"><path d="M0.7 1 L4.5 4.8 L8.3 1" fill="none" stroke="#555" stroke-width="2"/></svg>
</div>
<div class="a" style="left:1202px;top:294px;width:200px;height:210px;background:#fff;border:1px solid #0078d7;box-shadow:2px 2px 3px rgba(0,0,0,.35)">
<div class="li" style="top:0px;"><span class="x" style="display:inline-block;letter-spacing:-0.349px;">Dijital Giriş</span></div>
<div class="li" style="top:13px;"><span class="x" style="display:inline-block;letter-spacing:-0.254px;">Sayıcı Yükselen Kenar</span></div>
<div class="li" style="top:26px;"><span class="x" style="display:inline-block;letter-spacing:-0.250px;">Sayıcı Yükselen Kenar Yönlü</span></div>
<div class="li" style="top:39px;"><span class="x" style="display:inline-block;letter-spacing:-0.287px;">Sayıcı Düşen Kenar</span></div>
<div class="li" style="top:52px;"><span class="x" style="display:inline-block;letter-spacing:-0.269px;">Sayıcı Düşen Kenar Yönlü</span></div>
<div class="li" style="top:65px;"><span class="x" style="display:inline-block;letter-spacing:-0.195px;">AB Enkoder 2X</span></div>
<div class="li" style="top:78px;background:#3399ff;color:#fff;"><span class="x" style="display:inline-block;letter-spacing:-0.143px;">ABZ Enkoder 2X</span></div>
<div class="li" style="top:91px;"><span class="x" style="display:inline-block;letter-spacing:-0.195px;">AB Enkoder 4X</span></div>
<div class="li" style="top:104px;"><span class="x" style="display:inline-block;letter-spacing:-0.143px;">ABZ Enkoder 4X</span></div>
<div class="li" style="top:117px;"><span class="x" style="display:inline-block;letter-spacing:-0.303px;">Frekans 1000 ms.</span></div>
<div class="li" style="top:130px;"><span class="x" style="display:inline-block;letter-spacing:-0.221px;">Periyot Yükselen Kenar</span></div>
<div class="li" style="top:143px;"><span class="x" style="display:inline-block;letter-spacing:-0.235px;">Periyot Düşen Kenar</span></div>
<div class="li" style="top:156px;"><span class="x" style="display:inline-block;letter-spacing:-0.175px;">Periyot Yükselen ve Düşen Kenar</span></div>
<div class="li" style="top:169px;"><span class="x" style="display:inline-block;letter-spacing:-0.241px;">Kesme Bloğu Yükselen Kenar</span></div>
<div class="li" style="top:182px;"><span class="x" style="display:inline-block;letter-spacing:-0.260px;">Kesme Bloğu Düşen Kenar</span></div>
<div class="li" style="top:195px;"><span class="x" style="display:inline-block;letter-spacing:-0.187px;">Kesme Bloğu Yükselen ve Düşen Kenar</span></div>
</div>
<div class="btn" style="left:1376px;top:699px;width:65px;border:2px solid #0078d7;line-height:19px"><span class="x" style="display:inline-block">OK</span></div>
<div class="btn" style="left:1466px;top:699px;width:65px;"><span class="x" style="display:inline-block">Cancel</span></div>
</body></html>
